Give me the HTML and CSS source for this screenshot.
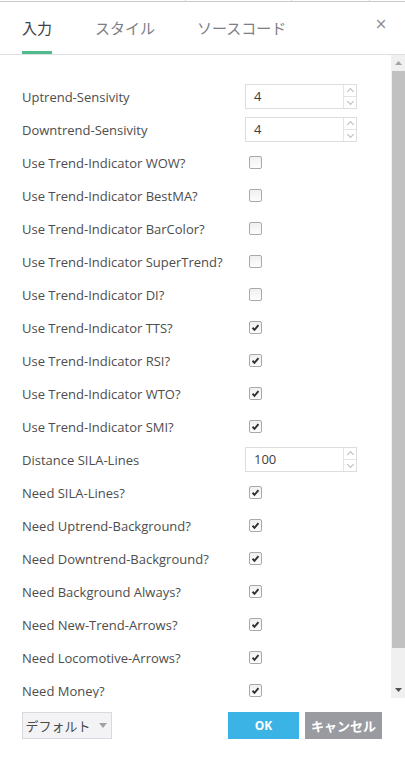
FILE: index.html
```html
<!DOCTYPE html>
<html lang="ja">
<head>
<meta charset="utf-8">
<link rel="stylesheet" href="styles.css">
</head>
<body>
<div class="dialog">
  <div class="topstrip"><span></span><span></span><span></span></div>
  <div class="header">
    <div class="tab active">入力</div>
    <div class="tab">スタイル</div>
    <div class="tab">ソースコード</div>
    <div class="close">×</div>
  </div>
  <div class="main">
    <div class="content">
      <div class="row"><div class="label">Uptrend-Sensivity</div><div class="num"><span class="val">4</span><span class="spin"><i class="up"></i><i class="down"></i></span></div></div>
      <div class="row"><div class="label">Downtrend-Sensivity</div><div class="num"><span class="val">4</span><span class="spin"><i class="up"></i><i class="down"></i></span></div></div>
      <div class="row"><div class="label">Use Trend-Indicator WOW?</div><div class="cb"></div></div>
      <div class="row"><div class="label">Use Trend-Indicator BestMA?</div><div class="cb"></div></div>
      <div class="row"><div class="label">Use Trend-Indicator BarColor?</div><div class="cb"></div></div>
      <div class="row"><div class="label">Use Trend-Indicator SuperTrend?</div><div class="cb"></div></div>
      <div class="row"><div class="label">Use Trend-Indicator DI?</div><div class="cb"></div></div>
      <div class="row"><div class="label">Use Trend-Indicator TTS?</div><div class="cb on"><svg viewBox="0 0 13 13"><path d="M3 6.8 L5.3 9.2 L10 3.8" /></svg></div></div>
      <div class="row"><div class="label">Use Trend-Indicator RSI?</div><div class="cb on"><svg viewBox="0 0 13 13"><path d="M3 6.8 L5.3 9.2 L10 3.8" /></svg></div></div>
      <div class="row"><div class="label">Use Trend-Indicator WTO?</div><div class="cb on"><svg viewBox="0 0 13 13"><path d="M3 6.8 L5.3 9.2 L10 3.8" /></svg></div></div>
      <div class="row"><div class="label">Use Trend-Indicator SMI?</div><div class="cb on"><svg viewBox="0 0 13 13"><path d="M3 6.8 L5.3 9.2 L10 3.8" /></svg></div></div>
      <div class="row"><div class="label">Distance SILA-Lines</div><div class="num"><span class="val">100</span><span class="spin"><i class="up"></i><i class="down"></i></span></div></div>
      <div class="row"><div class="label">Need SILA-Lines?</div><div class="cb on"><svg viewBox="0 0 13 13"><path d="M3 6.8 L5.3 9.2 L10 3.8" /></svg></div></div>
      <div class="row"><div class="label">Need Uptrend-Background?</div><div class="cb on"><svg viewBox="0 0 13 13"><path d="M3 6.8 L5.3 9.2 L10 3.8" /></svg></div></div>
      <div class="row"><div class="label">Need Downtrend-Background?</div><div class="cb on"><svg viewBox="0 0 13 13"><path d="M3 6.8 L5.3 9.2 L10 3.8" /></svg></div></div>
      <div class="row"><div class="label">Need Background Always?</div><div class="cb on"><svg viewBox="0 0 13 13"><path d="M3 6.8 L5.3 9.2 L10 3.8" /></svg></div></div>
      <div class="row"><div class="label">Need New-Trend-Arrows?</div><div class="cb on"><svg viewBox="0 0 13 13"><path d="M3 6.8 L5.3 9.2 L10 3.8" /></svg></div></div>
      <div class="row"><div class="label">Need Locomotive-Arrows?</div><div class="cb on"><svg viewBox="0 0 13 13"><path d="M3 6.8 L5.3 9.2 L10 3.8" /></svg></div></div>
      <div class="row"><div class="label">Need Money?</div><div class="cb on"><svg viewBox="0 0 13 13"><path d="M3 6.8 L5.3 9.2 L10 3.8" /></svg></div></div>
    </div>
    <div class="scrollbar">
      <div class="arrow"><svg viewBox="0 0 13 16"><path d="M3 10 L6.5 6 L10 10 Z"/></svg></div>
      <div class="thumb"></div>
      <div class="track"></div>
      <div class="arrow"><svg viewBox="0 0 13 16"><path d="M3 6 L6.5 10 L10 6 Z"/></svg></div>
    </div>
  </div>
  <div class="footer">
    <div class="btn default">デフォルト<span class="caret"></span></div>
    <div class="spacer"></div>
    <div class="btn ok">OK</div>
    <div class="btn cancel">キャンセル</div>
  </div>
</div>
</body>
</html>
```
FILE: styles.css
```css
* { box-sizing: border-box; }
html, body { margin: 0; padding: 0; background: #fff; }
body {
  font-family: "Open Sans", "Noto Sans CJK JP", sans-serif;
  color: #4a4a4a;
  width: 405px;
  height: 765px;
  overflow: hidden;
}
.dialog { display: flex; flex-direction: column; height: 765px; }
.topstrip {
  height: 2px;
  border-bottom: 1px solid #c9c9c9;
  display: flex;
}
.topstrip span { width: 1px; height: 1px; background: #d5d5d5; }
.topstrip span:nth-child(1) { margin-left: 185px; }
.topstrip span:nth-child(2) { margin-left: 105px; }
.topstrip span:nth-child(3) { margin-left: 77px; }
.header {
  height: 53px;
  display: flex;
  align-items: stretch;
  padding-left: 22px;
  border-bottom: 1px solid #e0e0e0;
}
.tab {
  font-family: "Noto Sans CJK JP", sans-serif;
  font-size: 15px;
  color: #7d7d85;
  display: flex;
  align-items: center;
  padding-top: 1px;
  margin-right: 43px;
  border-bottom: 3px solid transparent;
}
.tab:nth-child(2) { margin-right: 42px; }
.tab.active { color: #3e4048; border-bottom-color: #4dbb8b; }
.close {
  margin-left: auto;
  width: 48px;
  display: flex;
  align-items: center;
  justify-content: center;
  font-family: "DejaVu Sans", sans-serif;
  font-size: 15px;
  color: #8f9095;
  padding-bottom: 8px;
}
.main { height: 643px; display: flex; }
.content {
  flex: 1;
  overflow: hidden;
  padding: 25px 0 0 22px;
}
.row { height: 33px; display: flex; align-items: center; }
.label { width: 223px; font-size: 13px; color: #4d4d4d; white-space: nowrap; }
.num {
  width: 112px;
  height: 25px;
  border: 1px solid #dcdde1;
  display: flex;
  background: #fff;
}
.num .val {
  flex: 1;
  padding-left: 8px;
  font-size: 13px;
  line-height: 23px;
  color: #3c3c3c;
}
.spin {
  width: 13px;
  border-left: 1px solid #e3e4e8;
  display: flex;
  flex-direction: column;
}
.spin i { flex: 1; position: relative; }
.spin i.up { border-bottom: 1px solid #e3e4e8; }
.spin i::after {
  content: "";
  position: absolute;
  left: 3.5px;
  width: 4px;
  height: 4px;
  border-left: 1px solid #b9bac0;
  border-top: 1px solid #b9bac0;
}
.spin i.up::after { top: 4px; transform: rotate(45deg); }
.spin i.down::after { top: 2px; transform: rotate(-135deg); }
.cb {
  width: 13px;
  height: 13px;
  margin-left: 4px;
  border: 1px solid #a9a9ad;
  border-radius: 2px;
  background: linear-gradient(#f0f0f2, #fdfdfd);
  display: flex;
}
.cb svg { width: 11px; height: 11px; }
.cb svg path { fill: none; stroke: #2d2d2d; stroke-width: 2.2; }
.scrollbar {
  width: 14px;
  background: #f0f0f0;
  display: flex;
  flex-direction: column;
  padding-left: 1px;
}
.arrow { height: 16px; display: flex; }
.arrow svg { width: 13px; height: 16px; }
.arrow svg path { fill: #a3a3a3; }
.arrow:last-child svg path { fill: #505050; }
.thumb { height: 577px; background: #c1c1c1; }
.track { flex: 1; }
.footer {
  flex: 1;
  display: flex;
  align-items: flex-start;
  padding: 14px 23px 0 22px;
}
.spacer { flex: 1; }
.btn {
  height: 27px;
  display: flex;
  align-items: center;
  justify-content: center;
  font-size: 13px;
  font-family: "Noto Sans CJK JP", sans-serif;
}
.btn.default {
  width: 90px;
  background: #f3f3f6;
  border: 1px solid #d9dae0;
  color: #4a4a4a;
  padding-right: 2px;
}
.caret {
  width: 0; height: 0;
  margin-left: 8px;
  border-left: 4.5px solid transparent;
  border-right: 4.5px solid transparent;
  border-top: 5px solid #a0a0a6;
}
.btn.ok {
  width: 71px;
  background: #3bb3e4;
  color: #fff;
  font-weight: bold;
  font-family: "Open Sans", sans-serif;
  font-size: 12px;
  margin-right: 6px;
}
.btn.cancel {
  width: 77px;
  background: #9a9ba1;
  color: #fff;
  font-weight: bold;
  font-size: 13px;
}
```
